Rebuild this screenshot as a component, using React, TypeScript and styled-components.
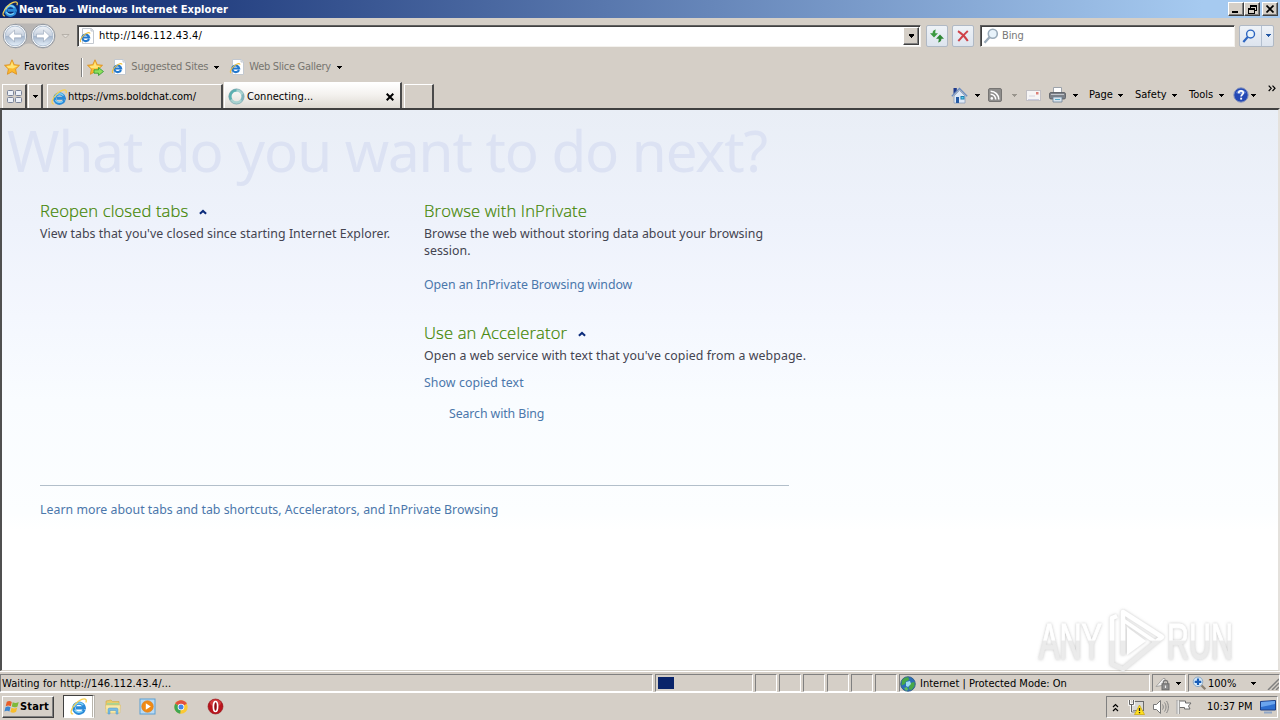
import React from "react";
import styled, { createGlobalStyle, css } from "styled-components";

const UI_FONT = `"DejaVu Sans Condensed", "DejaVu Sans", "Liberation Sans", sans-serif`;
const PAGE_FONT = `"Noto Sans", "Open Sans", sans-serif`;
const LIGHT_FONT = `"Open Sans", "Noto Sans", sans-serif`;

const FACE = "#d5cfc7";

const GlobalStyle = createGlobalStyle`
  * {
    box-sizing: border-box;
  }
  html, body {
    margin: 0;
    padding: 0;
    overflow: hidden;
  }
  svg {
    display: block;
    flex: none;
  }
`;

const Desktop = styled.div`
  display: flex;
  flex-direction: column;
  width: 1280px;
  height: 720px;
  overflow: hidden;
  background: ${FACE};
  color: #000;
  font-family: ${UI_FONT};
  font-stretch: condensed;
  font-size: 11px;
  line-height: 14px;
`;

const Spacer = styled.div`
  flex: 1;
`;

const Text = styled.span<{ $left?: number; $track?: number; $color?: string }>`
  margin-left: ${props => props.$left ?? 0}px;
  letter-spacing: ${props => props.$track ?? 0}px;
  color: ${props => props.$color ?? "#000"};
  white-space: nowrap;
`;

const raised = css`
  border: 1px solid;
  border-color: #fff #404040 #404040 #fff;
  box-shadow: inset -1px -1px 0 #808080;
`;

/* title bar */

const TitleBar = styled.div`
  display: flex;
  align-items: center;
  height: 18px;
  flex: none;
  padding: 0 2px 0 2px;
  background: linear-gradient(to right, #0a246a, #a6caf0 94%);
`;

const Title = styled.span`
  flex: 1;
  margin-left: 1px;
  padding-top: 1px;
  color: #fff;
  font-weight: bold;
  letter-spacing: 0.05px;
  white-space: nowrap;
`;

const CaptionButton = styled.div<{ $left?: number }>`
  ${raised}
  display: flex;
  align-items: center;
  justify-content: center;
  width: 16px;
  height: 14px;
  margin-left: ${props => props.$left ?? 0}px;
  background: ${FACE};
`;

/* navigation */

const NavBar = styled.div`
  display: flex;
  align-items: center;
  height: 35px;
  flex: none;
  padding: 0 6px 0 2px;
`;

const AddressBox = styled.div`
  display: flex;
  align-items: center;
  width: 844px;
  height: 22px;
  margin-left: 5px;
  padding: 0 1px;
  background: #fff;
  border: 1px solid;
  border-color: #606060 #f4f2ee #f4f2ee #606060;
  box-shadow: inset 1px 1px 0 #404040;
`;

const DropButton = styled.div`
  ${raised}
  display: flex;
  align-items: center;
  justify-content: center;
  width: 16px;
  height: 18px;
  background: ${FACE};
`;

const ToolButton = styled.div<{ $width?: number; $left?: number }>`
  display: flex;
  align-items: center;
  justify-content: center;
  width: ${props => props.$width ?? 22}px;
  height: 22px;
  margin-left: ${props => props.$left ?? 0}px;
  border: 1px solid #b0b9c5;
  border-radius: 2px;
  background: linear-gradient(#eef2f7, #dde4ee);
`;

const SearchBox = styled.div`
  display: flex;
  align-items: center;
  width: 255px;
  height: 22px;
  margin-left: 6px;
  padding-left: 2px;
  background: #fff;
  border: 1px solid;
  border-color: #606060 #f4f2ee #f4f2ee #606060;
  box-shadow: inset 1px 1px 0 #404040;
`;

const SearchSplit = styled.div`
  width: 1px;
  height: 20px;
  margin: 0 4px 0 5px;
  background: #b4c0d0;
`;

/* favorites */

const FavoritesBar = styled.div`
  display: flex;
  align-items: center;
  height: 28px;
  flex: none;
  padding-left: 4px;
`;

const Divider = styled.div`
  width: 2px;
  height: 19px;
  margin: 0 4px 0 12px;
  border-left: 1px solid #808080;
  border-right: 1px solid #fff;
`;

/* tabs + command bar */

const TabRow = styled.div`
  display: flex;
  align-items: flex-end;
  height: 27px;
  flex: none;
  padding-left: 2px;
`;

const Tab = styled.div<{ $width: number; $left?: number; $active?: boolean }>`
  display: flex;
  align-items: center;
  width: ${props => props.$width}px;
  height: ${props => (props.$active ? 26 : 24)}px;
  margin-left: ${props => props.$left ?? 0}px;
  padding: ${props => (props.$active ? "2px 6px 0 3px" : "1px 7px 0 3px")};
  border-top: 1px solid #fff;
  border-left: 1px solid #fff;
  border-right: 2px solid #4a4a4a;
  background: ${props =>
    props.$active ? "linear-gradient(#ffffff, #f4f2ef 45%, #dedad3)" : FACE};
`;

const SmallTab = styled(Tab)`
  justify-content: center;
  padding: 0;
`;

const CommandBar = styled.div`
  display: flex;
  align-items: center;
  align-self: stretch;
  padding-top: 1px;
  margin-right: 4px;
`;

const Command = styled.div<{ $width: number }>`
  display: flex;
  align-items: center;
  width: ${props => props.$width}px;
  white-space: nowrap;
`;

const CommandLabel = styled.span<{ $width: number }>`
  width: ${props => props.$width}px;
`;

const Chevron = styled.div`
  align-self: flex-start;
  margin-top: 3px;
`;

/* page */

const Viewport = styled.div`
  display: flex;
  flex-direction: column;
  height: 563px;
  flex: none;
  padding: 0 0 0 6px;
  border: solid;
  border-width: 2px 2px 1px 2px;
  border-color: #404040 #e4e1dc #d4d0c8 #505050;
  background: linear-gradient(
    #e9eef6,
    #eef2fb 20%,
    #f4f7fe 37%,
    #f9fcff 52%,
    #fcfeff 72%,
    #ffffff 75%
  );
  font-family: ${PAGE_FONT};
  font-stretch: normal;
  font-size: 12.35px;
  line-height: 17px;
  color: #444450;
`;

const Hero = styled.h1`
  height: 84px;
  margin: 0 0 0 -1px;
  font: 400 56.5px/82px ${PAGE_FONT};
  letter-spacing: -1.07px;
  white-space: nowrap;
  color: #dce2f3;
`;

const Columns = styled.div`
  display: grid;
  grid-template-columns: 384px 400px;
  height: 291px;
  padding: 6px 0 0 32px;
`;

const Heading = styled.h2<{ $track?: number }>`
  display: flex;
  align-items: center;
  height: 22px;
  margin: 0 0 3px;
  font: 300 16.6px/22px ${LIGHT_FONT};
  letter-spacing: ${props => props.$track ?? 0.12}px;
  color: #3f8400;
  -webkit-text-stroke: 0.2px #3f8400;

  svg {
    margin: 2px 0 0 11px;
  }
`;

const Paragraph = styled.p<{ $width?: number; $track?: number }>`
  width: ${props => (props.$width ? `${props.$width}px` : "auto")};
  margin: 0;
  letter-spacing: ${props => props.$track ?? 0}px;
  white-space: ${props => (props.$width ? "normal" : "nowrap")};
`;

const Link = styled.a<{ $top?: number; $left?: number; $track?: number }>`
  display: block;
  margin: ${props => props.$top ?? 0}px 0 0 ${props => props.$left ?? 0}px;
  letter-spacing: ${props => props.$track ?? 0}px;
  color: #4b77ab;
  white-space: nowrap;
`;

const Section = styled.section<{ $top?: number }>`
  margin-top: ${props => props.$top ?? 0}px;
`;

const Footer = styled.div`
  width: 749px;
  margin-left: 32px;
  padding-top: 15px;
  border-top: 1px solid #b2bfca;
`;

const Watermark = styled.svg`
  position: absolute;
  left: 1026px;
  top: 594px;
`;

/* status bar */

const StatusBar = styled.div`
  display: flex;
  align-items: center;
  height: 22px;
  flex: none;
  padding-top: 2px;
  border-top: 1px solid #fff;
  border-bottom: 1px solid #fff;
`;

const StatusCell = styled.div<{ $width: number }>`
  display: flex;
  align-items: center;
  width: ${props => props.$width}px;
  height: 18px;
  margin-right: 2px;
  padding-top: 1px;
  flex: none;
  border: 1px solid;
  border-color: #808080 #fff #fff #808080;
`;

const Progress = styled.div`
  width: 16px;
  height: 12px;
  margin: -1px 0 0 2px;
  background: #0a246a;
`;

/* taskbar */

const Taskbar = styled.div`
  display: flex;
  align-items: center;
  height: 27px;
  flex: none;
  padding: 0 2px 0 2px;
`;

const StartButton = styled.div`
  ${raised}
  display: flex;
  align-items: center;
  width: 52px;
  height: 22px;
  padding: 1px 0 0 1px;
  font-weight: bold;
  letter-spacing: 0.15px;
`;

const TaskSlot = styled.div<{ $active?: boolean }>`
  display: flex;
  align-items: center;
  justify-content: center;
  width: 32px;
  height: 23px;
  margin-right: 2px;
  ${props =>
    props.$active &&
    css`
      background: #fff;
      border: 1px solid;
      border-color: #404040 #fff #fff #404040;
      border-right: 3px double #b8b4ac;
    `}
`;

const Tray = styled.div`
  display: flex;
  align-items: center;
  width: 172px;
  height: 22px;
  padding: 1px 0 0 5px;
  border: 1px solid;
  border-color: #808080 #fff #fff #808080;
`;

const Gap = styled.div<{ $w: number }>`
  width: ${props => props.$w}px;
  flex: none;
`;

const Arrow = ({ color = "#000", size = 5 }: { color?: string; size?: number }) => (
  <svg width={size} height={size === 7 ? 4 : 3} viewBox="0 0 5 3" shapeRendering="crispEdges">
    <path d="M0 0h5L2.5 3z" fill={color} />
  </svg>
);

const IeIcon = ({ size = 16 }: { size?: number }) => (
  <svg width={size} height={size} viewBox="0 0 16 16">
    <path
      d="M13.300 11A5 4.800 0 1 1 13.500 9.300H5.500"
      fill="none"
      stroke="#2a8ad8"
      strokeWidth="2.900"
    />
    <path
      d="M4 8.500A4.700 4.500 0 0 1 12.500 6.700M4.300 11.200A4.900 4.500 0 0 0 11.800 12.300"
      fill="none"
      stroke="#7dd0f7"
      strokeWidth="1.300"
    />
    <path
      d="M3 15C-.4 15.200.8 9.800 5.300 5.300 9.300 1.300 13.600 0 14.900 1.400c.6.700.5 1.700 0 2.800"
      fill="none"
      stroke="#f7d050"
      strokeWidth="1.200"
    />
  </svg>
);

const IePageIcon = () => (
  <svg width="16" height="16" viewBox="0 0 16 16">
    <path d="M3.500.5h9l2 2v13h-11z" fill="#fff" stroke="#c3c8cf" />
    <path d="M12 .5v2.500h2.500" fill="#e3e9f0" stroke="#c3c8cf" />
    <path d="M10 11A3.500 3.300 0 1 1 10.200 9.500H4.300" fill="none" stroke="#2479cd" strokeWidth="2.100" />
    <path d="M2 14C.2 12.800 2.600 9 5.600 6.600s5.200-2.500 5.400-1" fill="none" stroke="#efc141" strokeWidth="1.100" />
  </svg>
);

const NavButtons = () => (
  <svg width="70" height="28" viewBox="0 0 70 28">
    <defs>
      <linearGradient id="orb" x1="0" y1="0" x2="0" y2="1">
        <stop offset="0" stopColor="#f1f4f8" />
        <stop offset=".48" stopColor="#c6d0de" />
        <stop offset=".52" stopColor="#a5b6cc" />
        <stop offset="1" stopColor="#e6f0fa" />
      </linearGradient>
    </defs>
    <path d="M13 1.500h28a12 12 0 0 1 0 25c-7 0-8-5-14-5s-7 5-14 5z" fill="#b9b6b4" />
    {[13, 41].map(x => (
      <g key={x}>
        <circle cx={x} cy="14" r="11.700" fill="#fafbfd" stroke="#8f969f" />
        <circle cx={x} cy="14" r="9.900" fill="url(#orb)" stroke="#a3b6cb" strokeWidth=".8" />
      </g>
    ))}
    <path d="M6.500 14l6-5.800v4h7v3.600h-7v4z" fill="#fff" stroke="#8797ad" strokeWidth=".5" />
    <path d="M47.500 14l-6-5.800v4h-7v3.600h7v4z" fill="#fff" stroke="#8797ad" strokeWidth=".5" />
    <path d="M60 12.500h7l-3.500 3.500z" fill="#e3dfd9" stroke="#aca7a0" strokeWidth=".8" />
  </svg>
);

const StarIcon = ({ add }: { add?: boolean }) => (
  <svg width="17" height="17" viewBox="0 0 17 17">
    <path
      d="M8 .8l2.200 4.900 5.300.6-3.900 3.700 1 5.300L8 12.700l-4.600 2.600 1-5.300L.5 6.300l5.300-.6z"
      fill="#fcb92c"
      stroke="#dc9222"
      strokeWidth=".9"
      strokeLinejoin="round"
    />
    <path d="M8 2.500l1.500 4 4.500.5-5 2.500-5-.5-1.500-2 4-.5z" fill="#ffe478" />
    {add && (
      <path d="M7 10.800h4.500V8.500l5 4-5 4v-2.300H7z" fill="#8fe05c" stroke="#2f9a34" strokeWidth=".8" />
    )}
  </svg>
);

const RefreshIcon = () => (
  <svg width="16" height="16" viewBox="0 0 16 16">
    <path d="M7 1.500C4.500 1.800 3.600 3.200 3.600 5.200H1L5 9.400l4-4.200H6.300c0-1.500 0-2.500.7-3.700z" fill="#3c9a41" />
    <path d="M9 14.500c2.500-.3 3.400-1.700 3.400-3.700H15l-4-4.200-4 4.200h2.700c0 1.500 0 2.500-.7 3.700z" fill="#2e8735" />
  </svg>
);

const StopIcon = () => (
  <svg width="14" height="14" viewBox="0 0 14 14">
    <path d="M2 2.200C5 4 9.500 8.500 11.800 12M11.800 2C8.500 5 5.500 8.500 2.300 12" stroke="#cf4148" strokeWidth="2" fill="none" />
  </svg>
);

const SearchIcon = ({ color, size = 16 }: { color: string; size?: number }) => (
  <svg width={size} height={size} viewBox="0 0 16 16">
    <circle cx="9.800" cy="5.800" r="4.500" fill="#e8f3fb" stroke={color} strokeWidth="1.600" />
    <path d="M6.500 9.200L1.500 14.800" stroke={color} strokeWidth="2.400" />
  </svg>
);

const QuickTabsIcon = () => (
  <svg width="17" height="15" viewBox="0 0 17 15">
    {[[1, 1], [9, 1], [1, 8], [9, 8]].map(([x, y]) => (
      <rect key={`${x}${y}`} x={x + 0.5} y={y + 0.5} width="6" height="5" rx="1" fill="#edf1f8" stroke="#7a8399" />
    ))}
  </svg>
);

const Spinner = () => (
  <svg width="17" height="17" viewBox="0 0 17 17">
    <circle cx="8.500" cy="8.500" r="6.300" fill="none" stroke="#a7d2d0" strokeWidth="3" />
    <path d="M8.500 2.200a6.300 6.300 0 0 0-5.500 9.500" fill="none" stroke="#5bb0b1" strokeWidth="2.600" />
    <path d="M13.500 12.300a6.300 6.300 0 0 0 1-6" fill="none" stroke="#7fb4bf" strokeWidth="2" />
    <circle cx="8.500" cy="8.500" r="7.600" fill="none" stroke="#7b9faa" strokeWidth=".6" />
  </svg>
);

const HomeIcon = () => (
  <svg width="17" height="17" viewBox="0 0 17 17">
    <path d="M3 9l5.500-5.500L14 9v7H3z" fill="#dfe9f6" stroke="#8ba0bd" strokeWidth=".8" />
    <path d="M2.500 1h3.300v3.500L2.500 7z" fill="#1f3a8c" />
    <path d="M.8 9.300L8.500 1.500l7.700 7.800" fill="none" stroke="#6c8dc0" strokeWidth="1.300" />
    <path d="M5 10h3v6H5z" fill="#245aa3" />
    <path d="M9.500 9h4v3.500h-4z" fill="#1d7fae" />
    <path d="M10.500 10h2v1.500h-2z" fill="#5fd0ee" />
  </svg>
);

const FeedIcon = () => (
  <svg width="14" height="14" viewBox="0 0 14 14">
    <rect x=".5" y=".5" width="13" height="13" rx="1.500" fill="#8f8e8c" stroke="#777573" />
    <circle cx="3.800" cy="10.400" r="1.300" fill="#fff" />
    <path d="M2.600 6.300a5 5 0 0 1 5.100 5.200M2.600 3.200a8.200 8.200 0 0 1 8.200 8.300" fill="none" stroke="#fff" strokeWidth="1.600" />
  </svg>
);

const MailIcon = () => (
  <svg width="15" height="11" viewBox="0 0 15 11">
    <rect x=".5" y=".5" width="14" height="10" fill="#f6f5f6" stroke="#c1bfc3" />
    <path d="M2 9.500h11" stroke="#c9cce0" />
    <rect x="10" y="2" width="2.500" height="2.500" fill="#dc8078" />
    <path d="M3 6h6" stroke="#d4d4de" />
  </svg>
);

const PrinterIcon = () => (
  <svg width="17" height="16" viewBox="0 0 17 16">
    <path d="M4.500.5h8V6h-8z" fill="#fff" stroke="#9da3ab" />
    <rect x=".5" y="5.500" width="16" height="6.500" rx="1.500" fill="#7c8087" stroke="#54585e" strokeWidth=".8" />
    <path d="M2 7.500h13" stroke="#c1c5cb" />
    <path d="M4 10h9v5H4z" fill="#d8e4ee" stroke="#6d8294" strokeWidth=".8" />
    <path d="M6 12.500h5" stroke="#55a9c8" />
  </svg>
);

const HelpIcon = () => (
  <svg width="16" height="16" viewBox="0 0 16 16">
    <circle cx="8" cy="8" r="7.200" fill="#2449b5" stroke="#8a97bd" />
    <path d="M3 6a5.500 5.500 0 0 1 10 0c-3 1.500-7 1.500-10 0z" fill="#7e9fe6" opacity=".7" />
    <path d="M5.700 6.200C5.800 3.200 10.500 3.300 10.300 6c-.1 1.500-2.100 1.700-2.200 3.500" fill="none" stroke="#fff" strokeWidth="1.700" />
    <rect x="7.200" y="10.700" width="1.900" height="1.900" fill="#fff" />
  </svg>
);

const DoubleChevron = () => (
  <svg width="8" height="7" viewBox="0 0 8 7">
    <path d="M.7.7l2.500 2.600L.7 6M4.500.7L7 3.300 4.500 6" fill="none" stroke="#000" strokeWidth="1.200" />
  </svg>
);

const Caret = () => (
  <svg width="8" height="6" viewBox="0 0 8 6">
    <path d="M.9 4.800L4 1.900l3.100 2.900" fill="none" stroke="#0c2c7c" strokeWidth="2" />
  </svg>
);

const GlobeIcon = () => (
  <svg width="16" height="16" viewBox="0 0 16 16">
    <circle cx="8" cy="8" r="7.300" fill="#2b6eb9" stroke="#28557c" strokeWidth=".8" />
    <path d="M2 4.500C4 1.500 7 1 8.500 1.500L9 4 6 5.500 5 8 1.500 9.500zM10 7l4.500-1v4l-3 4-3-1 1-3z" fill="#47a847" />
    <path d="M4 12l3-1 1 3-2 .8z" fill="#5fc05a" />
    <path d="M6 6l4-1 1 3-3 3-2-1z" fill="#9bdcf2" />
  </svg>
);

const LockIcon = () => (
  <svg width="16" height="14" viewBox="0 0 16 14">
    <path d="M1 9.500L8 1.500h2v6.500z" fill="#f2f2f2" stroke="#a5a3a0" />
    <path d="M8.300 7V5.500a2.200 2.200 0 0 1 4.400 0V7" fill="none" stroke="#777" strokeWidth="1.300" />
    <rect x="7" y="6.800" width="7" height="6" fill="#8d8d8d" stroke="#6c6c6c" />
    <path d="M10.500 8.500v2.500" stroke="#eee" strokeWidth="1.200" />
  </svg>
);

const ZoomIcon = () => (
  <svg width="15" height="15" viewBox="0 0 15 15">
    <path d="M8.800 8.800l4.500 4.500" stroke="#8b8173" strokeWidth="2.300" />
    <circle cx="6" cy="5.800" r="4.800" fill="#d8ebfa" stroke="#8ea9c4" />
    <path d="M6 2.500v6.600M2.700 5.800h6.600" stroke="#195db8" strokeWidth="2.200" />
  </svg>
);

const WindowsIcon = () => (
  <svg width="16" height="16" viewBox="0 0 16 16">
    <path d="M2.800 2.800C4.800 1.600 6.300 2 7.800 3L6.800 7.300C5.200 6.300 3.700 6.200 1.700 7.200z" fill="#e95e28" />
    <path d="M8.700 3.300c2 1 3.700 1 6-.2L13.500 7.400c-2.100 1.200-3.800 1.100-5.700.2z" fill="#7fb93a" />
    <path d="M1.500 8.200c2-1.100 3.500-.8 5 .1L5.400 12.600c-1.600-1-3-1-5 0z" fill="#3d86d0" />
    <path d="M7.500 8.700c1.900 1 3.600 1 5.700-.2l-1.100 4.300c-2.200 1.200-3.700 1.200-5.700.2z" fill="#f8bd2b" />
  </svg>
);

const FolderIcon = () => (
  <svg width="18" height="18" viewBox="0 0 18 18">
    <path d="M2 3l5-1 1.500 1.500H15V11H2z" fill="#e8cc6a" stroke="#cfa944" strokeWidth=".6" />
    <path d="M3 5h12v3H3z" fill="#a9d593" />
    <path d="M1.500 7h15l-.6 8H2.200z" fill="#f9e9a7" stroke="#dcc06a" strokeWidth=".6" />
    <path d="M4 16v-4.500a1.500 1.500 0 0 1 1.500-1.500h7a1.500 1.500 0 0 1 1.500 1.500V16h-2v-3.500H6V16z" fill="#78bce4" stroke="#4e97c5" strokeWidth=".5" />
  </svg>
);

const PlayerIcon = () => (
  <svg width="17" height="17" viewBox="0 0 17 17">
    <rect x="1" y="1" width="15" height="15" fill="#b9daf3" stroke="#5a9fd4" />
    <circle cx="8.500" cy="8.500" r="5.800" fill="#f08a14" stroke="#d97818" strokeWidth=".6" />
    <path d="M6.800 5.300v6.400l5-3.200z" fill="#fff" />
  </svg>
);

const ChromeIcon = () => (
  <svg width="16" height="16" viewBox="0 0 16 16">
    <circle cx="8" cy="8" r="6.700" fill="#fbc934" />
    <path d="M8 8L2.200 4.700A6.700 6.700 0 0 1 13.800 4.700z" fill="#e2503f" />
    <path d="M8 8L2.200 4.700A6.700 6.700 0 0 0 7.200 14.700z" fill="#3fa652" />
    <circle cx="8" cy="8" r="3.300" fill="#fff" />
    <circle cx="8" cy="8" r="2.500" fill="#4586e8" />
  </svg>
);

const OperaIcon = () => (
  <svg width="17" height="17" viewBox="0 0 17 17">
    <circle cx="8.500" cy="8.500" r="7.500" fill="#b9141c" stroke="#8e1116" strokeWidth=".6" />
    <ellipse cx="8.500" cy="5" rx="5.500" ry="3.500" fill="#dd4a4a" opacity=".7" />
    <ellipse cx="8.500" cy="8.500" rx="2.100" ry="5" fill="#8f0a10" stroke="#fff" strokeWidth="1.700" />
  </svg>
);

const NetworkIcon = () => (
  <svg width="17" height="16" viewBox="0 0 17 16">
    <rect x="4.500" y="2.500" width="11" height="9" fill="#d9d9d7" stroke="#6b6b6b" />
    <path d="M1.500 1v4.500h4V1M3.500 5.500V13h4" fill="none" stroke="#fff" strokeWidth="2.600" />
    <path d="M1.500 1v4.500h4V1M3.500 5.500V13h4" fill="none" stroke="#646464" />
    <path d="M11.500 6l5 9.500h-10z" fill="#ffe01f" stroke="#c9a309" strokeWidth=".7" />
    <path d="M11.500 9v3M11.500 13v1.200" stroke="#222" strokeWidth="1.300" />
  </svg>
);

const SpeakerIcon = () => (
  <svg width="18" height="16" viewBox="0 0 18 16">
    <path d="M1.500 5.500h3l4-4v13l-4-4h-3z" fill="#fff" stroke="#777" />
    <path d="M10.500 5.500c1 1.500 1 3.500 0 5M12.500 3.500c2 2.600 2 6.400 0 9M14.500 2c2.500 3.500 2.500 8.500 0 12" fill="none" stroke="#858585" />
  </svg>
);

const FlagIcon = () => (
  <svg width="16" height="16" viewBox="0 0 16 16">
    <path d="M3.500 2h6v2h5.500l-2.500 3 1.500 3H8.500V8.500H3.500" fill="#fff" stroke="#6b6b6b" />
    <path d="M2 1.500V15" stroke="#fff" strokeWidth="3" />
    <path d="M1 1v14M3.300 1v14" stroke="#777" strokeWidth=".8" />
  </svg>
);

const MonitorIcon = () => (
  <svg width="16" height="14" viewBox="0 0 16 14">
    <path d="M.5 1.500l15-1v9.500H.5z" fill="#2e6fd0" stroke="#1d3f86" />
    <path d="M1 2l14-1v3L1 7z" fill="#6ba5ee" />
    <path d="M4 12.500h8" stroke="#91a7c6" strokeWidth="2" />
  </svg>
);

const WatermarkLogo = () => (
  <Watermark width="250" height="84" viewBox="0 -6 250 84">
    <defs>
      <linearGradient id="mark" gradientUnits="userSpaceOnUse" x1="0" y1="10" x2="0" y2="70">
        <stop offset=".5" stopColor="#fff" />
        <stop offset=".52" stopColor="#ebebeb" />
      </linearGradient>
      <filter id="halo" x="-10%" y="-20%" width="120%" height="140%">
        <feDropShadow dx="0" dy="0" stdDeviation="1.800" floodColor="#999" floodOpacity=".6" />
      </filter>
    </defs>
    <g filter="url(#halo)">
      <g fontFamily="Liberation Sans, sans-serif" fontSize="50" fill="url(#mark)" stroke="url(#mark)">
        <text x="13" y="59" textLength="63" lengthAdjust="spacingAndGlyphs">
          ANY
        </text>
        <text x="141" y="59" textLength="66" lengthAdjust="spacingAndGlyphs">
          RUN
        </text>
      </g>
      <g fill="none" stroke="url(#mark)" strokeWidth="4.500" strokeLinejoin="round">
        <path d="M97 55V12l39 25-39 32-11-5V18l5-2" />
        <path d="M97 20l34 23" strokeWidth="3.500" />
        <path d="M101 27l19 14-19 14z" fill="#fff" stroke="none" />
      </g>
    </g>
  </Watermark>
);

const App = () => (
  <Desktop>
    <GlobalStyle />
    <TitleBar>
      <IeIcon />
      <Title>New Tab - Windows Internet Explorer</Title>
      <CaptionButton>
        <svg width="8" height="8" viewBox="0 0 8 8"><path d="M0 6h6v2H0z" /></svg>
      </CaptionButton>
      <CaptionButton>
        <svg width="9" height="9" viewBox="0 0 9 9" shapeRendering="crispEdges">
          <path d="M2 0h7v6H7V5h1V2H3v1H2zM0 3h7v6H0zM1 5v3h5V5z" fillRule="evenodd" />
        </svg>
      </CaptionButton>
      <CaptionButton $left={2}>
        <svg width="8" height="8" viewBox="0 0 8 8"><path d="M.5.5l7 7M7.500.5l-7 7" stroke="#000" strokeWidth="1.700" /></svg>
      </CaptionButton>
    </TitleBar>

    <NavBar>
      <NavButtons />
      <AddressBox>
        <IePageIcon />
        <Text $left={4} $track={0.16}>http://146.112.43.4/</Text>
        <Spacer />
        <DropButton><Arrow size={7} /></DropButton>
      </AddressBox>
      <ToolButton $left={5}><RefreshIcon /></ToolButton>
      <ToolButton $left={4}><StopIcon /></ToolButton>
      <SearchBox>
        <SearchIcon color="#9aabba" />
        <Text $left={3} $track={-0.1} $color="#777">Bing</Text>
      </SearchBox>
      <ToolButton $width={35} $left={4}>
        <SearchIcon color="#2c64c0" size={14} />
        <SearchSplit />
        <Arrow color="#2458a4" />
      </ToolButton>
    </NavBar>

    <FavoritesBar>
      <StarIcon />
      <Text $left={3} $track={0.08}>Favorites</Text>
      <Divider />
      <StarIcon add />
      <Gap $w={7} />
      <IePageIcon />
      <Text $left={4} $track={-0.2} $color="#77756f">Suggested Sites</Text>
      <Gap $w={6} />
      <Arrow />
      <Gap $w={10} />
      <IePageIcon />
      <Text $left={4} $track={-0.28} $color="#77756f">Web Slice Gallery</Text>
      <Gap $w={6} />
      <Arrow />
    </FavoritesBar>

    <TabRow>
      <SmallTab $width={25}><QuickTabsIcon /></SmallTab>
      <SmallTab $width={15} $left={1}><Arrow /></SmallTab>
      <Tab $width={176} $left={4}>
        <IeIcon />
        <Text $left={1} $track={-0.08}>https://vms.boldchat.com/</Text>
      </Tab>
      <Tab $width={178} $left={1} $active>
        <Spinner />
        <Text $left={2} $track={0.05}>Connecting...</Text>
        <Spacer />
        <svg width="8" height="8" viewBox="0 0 8 8"><path d="M.7.7l6.600 6.600M7.300.7L.7 7.300" stroke="#000" strokeWidth="2" /></svg>
      </Tab>
      <Tab $width={30} $left={2} />
      <Spacer />
      <CommandBar>
        <Command $width={37}><HomeIcon /><Gap $w={7} /><Arrow /></Command>
        <Command $width={38}><FeedIcon /><Gap $w={10} /><Arrow color="#99958d" /></Command>
        <Command $width={23}><MailIcon /></Command>
        <Command $width={40}><PrinterIcon /><Gap $w={7} /><Arrow /></Command>
        <Command $width={46}><CommandLabel $width={29}>Page</CommandLabel><Arrow /></Command>
        <Command $width={54}><CommandLabel $width={37}>Safety</CommandLabel><Arrow /></Command>
        <Command $width={44}><CommandLabel $width={30}>Tools</CommandLabel><Arrow /></Command>
        <Command $width={35}><HelpIcon /><Gap $w={2} /><Arrow /></Command>
        <Chevron><DoubleChevron /></Chevron>
      </CommandBar>
    </TabRow>

    <Viewport>
      <Hero>What do you want to do next?</Hero>
      <Columns>
        <div>
          <Heading>Reopen closed tabs<Caret /></Heading>
          <Paragraph $track={0.04}>
            View tabs that you've closed since starting Internet Explorer.
          </Paragraph>
        </div>
        <div>
          <Section>
            <Heading $track={0.14}>Browse with InPrivate</Heading>
            <Paragraph $width={360} $track={0.025}>
              Browse the web without storing data about your browsing session.
            </Paragraph>
            <Link $top={17} $track={-0.07}>Open an InPrivate Browsing window</Link>
          </Section>
          <Section $top={29}>
            <Heading $track={0.14}>Use an Accelerator<Caret /></Heading>
            <Paragraph $track={0.08}>
              Open a web service with text that you've copied from a webpage.
            </Paragraph>
            <Link $top={10} $track={0.07}>Show copied text</Link>
            <Link $top={14} $left={25} $track={-0.1}>Search with Bing</Link>
          </Section>
        </div>
      </Columns>
      <Footer>
        <Link $track={0.015}>
          Learn more about tabs and tab shortcuts, Accelerators, and InPrivate Browsing
        </Link>
      </Footer>
    </Viewport>
    <WatermarkLogo />

    <StatusBar>
      <StatusCell $width={653}>
        <Text $left={1} $track={0.09}>Waiting for http://146.112.43.4/...</Text>
      </StatusCell>
      <StatusCell $width={98}><Progress /></StatusCell>
      {[0, 1, 2, 3, 4, 5].map(i => (
        <StatusCell key={i} $width={22} />
      ))}
      <StatusCell $width={251}>
        <GlobeIcon />
        <Text $left={4}>Internet | Protected Mode: On</Text>
      </StatusCell>
      <StatusCell $width={34}>
        <Gap $w={2} />
        <LockIcon />
        <Gap $w={5} />
        <Arrow />
      </StatusCell>
      <StatusCell $width={92}>
        <Gap $w={3} />
        <ZoomIcon />
        <Text $left={1}>100%</Text>
        <Gap $w={15} />
        <Arrow />
        <Gap $w={11} />
        <svg width="12" height="13" viewBox="0 0 12 13">
          <path d="M1 13L12 2M5 13l7-7M9 13l3-3" stroke="#808080" strokeWidth="1.500" />
        </svg>
      </StatusCell>
    </StatusBar>

    <Taskbar>
      <StartButton>
        <WindowsIcon />
        <span>Start</span>
      </StartButton>
      <Gap $w={9} />
      <TaskSlot $active><IeIcon size={17} /></TaskSlot>
      <TaskSlot><FolderIcon /></TaskSlot>
      <TaskSlot><PlayerIcon /></TaskSlot>
      <TaskSlot><ChromeIcon /></TaskSlot>
      <TaskSlot><OperaIcon /></TaskSlot>
      <Spacer />
      <Tray>
        <svg width="7" height="9" viewBox="0 0 7 9">
          <path d="M1 4l2.500-2.500L6 4M1 8l2.500-2.500L6 8" fill="none" stroke="#000" strokeWidth="1.200" />
        </svg>
        <Gap $w={9} />
        <NetworkIcon />
        <Gap $w={7} />
        <SpeakerIcon />
        <Gap $w={6} />
        <FlagIcon />
        <Gap $w={15} />
        <Text $track={-0.1}>10:37 PM</Text>
        <Gap $w={8} />
        <MonitorIcon />
      </Tray>
    </Taskbar>
  </Desktop>
);

export default App;
